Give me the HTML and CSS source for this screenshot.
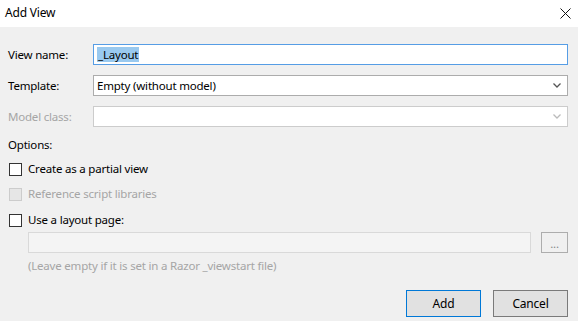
FILE: index.html
```html
<!DOCTYPE html>
<html>
<head>
<meta charset="utf-8">
<link rel="stylesheet" href="styles.css">
</head>
<body>
<div class="dialog">
  <div class="titlebar">
    <span class="title">Add View</span>
    <svg class="close" width="11" height="11" viewBox="0 0 11 11"><path d="M0.5 0.5 L10.5 10.5 M10.5 0.5 L0.5 10.5" stroke="#111" stroke-width="1" fill="none"/></svg>
  </div>
  <div class="content">
    <div class="fields">
      <div class="label">View name:</div>
      <div class="box focus"><span class="sel">_Layout</span></div>
      <div class="label">Template:</div>
      <div class="box select"><span>Empty (without model)</span>
        <svg class="chev" width="8" height="5" viewBox="0 0 8 5"><path d="M0.5 0.5 L4 4 L7.5 0.5" stroke="#555" stroke-width="1.3" fill="none"/></svg>
      </div>
      <div class="label disabled">Model class:</div>
      <div class="box select dis">
        <svg class="chev" width="8" height="5" viewBox="0 0 8 5"><path d="M0.5 0.5 L4 4 L7.5 0.5" stroke="#bbb" stroke-width="1.3" fill="none"/></svg>
      </div>
    </div>
    <div class="options">Options:</div>
    <div class="check r1"><span class="cb"></span><span>Create as a partial view</span></div>
    <div class="check r2 disabled"><span class="cb dcb"></span><span>Reference script libraries</span></div>
    <div class="check r3"><span class="cb"></span><span>Use a layout page:</span></div>
    <div class="pathrow">
      <div class="path"></div>
      <div class="browse">...</div>
    </div>
    <div class="hint">(Leave empty if it is set in a Razor _viewstart file)</div>
    <div class="buttons">
      <div class="btn default">Add</div>
      <div class="btn">Cancel</div>
    </div>
  </div>
</div>
</body>
</html>
```
FILE: styles.css
```css
html, body {
  margin: 0;
  padding: 0;
}
body {
  font-family: "Segoe UI", "Noto Sans", "Open Sans", sans-serif;
  font-size: 11.5px;
  letter-spacing: -0.2px;
  color: #000;
  background: #f0f0f0;
}
.dialog {
  width: 578px;
  height: 321px;
  background: #f0f0f0;
  overflow: hidden;
}
.titlebar {
  height: 27px;
  background: #fff;
  display: flex;
  align-items: center;
  justify-content: space-between;
  padding: 0 7px 2px 5px;
  box-sizing: border-box;
}
.title {
  font-size: 12px;
  letter-spacing: -0.2px;
}
.close {
  display: block;
  margin-top: 1px;
}
.content {
  padding: 17px 10px 0 8px;
}
.fields {
  display: grid;
  grid-template-columns: 85px 1fr;
  grid-auto-rows: 21px;
  row-gap: 10px;
}
.label {
  display: flex;
  align-items: center;
  line-height: 16px;
}
.disabled {
  color: #a5a5a5;
}
.box {
  border: 1px solid #acacac;
  background: #fff;
  box-sizing: border-box;
  display: flex;
  align-items: center;
  padding-left: 3px;
  line-height: 16px;
}
.box.focus {
  border-color: #569de5;
}
.sel {
  background: #99c9ef;
  padding: 0 1px;
  line-height: 15px;
}
.select {
  justify-content: space-between;
  padding-right: 6px;
}
.box.dis {
  border-color: #cccccc;
  justify-content: flex-end;
}
.chev {
  display: block;
}
.options {
  margin-top: 10px;
  height: 16px;
  line-height: 16px;
}
.check {
  display: flex;
  align-items: center;
  height: 14px;
  line-height: 16px;
}
.r1 { margin-top: 9px; }
.r2 { margin-top: 11px; }
.r3 { margin-top: 12px; }
.cb {
  width: 13px;
  height: 13px;
  box-sizing: border-box;
  border: 1px solid #333;
  background: #fff;
  margin: 0 6px 0 1px;
  flex: none;
}
.dcb {
  border-color: #cccccc;
  background: #e6e6e6;
}
.pathrow {
  display: flex;
  margin: 5px 0 0 20px;
  height: 21px;
  gap: 10px;
}
.path {
  flex: 1;
  border: 1px solid #d9d9d9;
  background: #f4f4f4;
}
.browse {
  width: 27px;
  box-sizing: border-box;
  border: 1px solid #adadad;
  background: #f0f0f0;
  color: #888;
  display: flex;
  align-items: center;
  justify-content: center;
  line-height: 12px;
  padding-top: 2px;
}
.hint {
  margin: 5px 0 0 20px;
  color: #a5a5a5;
  line-height: 16px;
}
.buttons {
  display: flex;
  justify-content: flex-end;
  gap: 12px;
  margin-top: 16px;
}
.btn {
  width: 75px;
  height: 27px;
  box-sizing: border-box;
  border: 1px solid #7a7a7a;
  background: #e1e1e1;
  display: flex;
  align-items: center;
  justify-content: center;
  line-height: 16px;
  font-size: 12px;
}
.btn.default {
  border: 1px solid #0078d7;
}
```
